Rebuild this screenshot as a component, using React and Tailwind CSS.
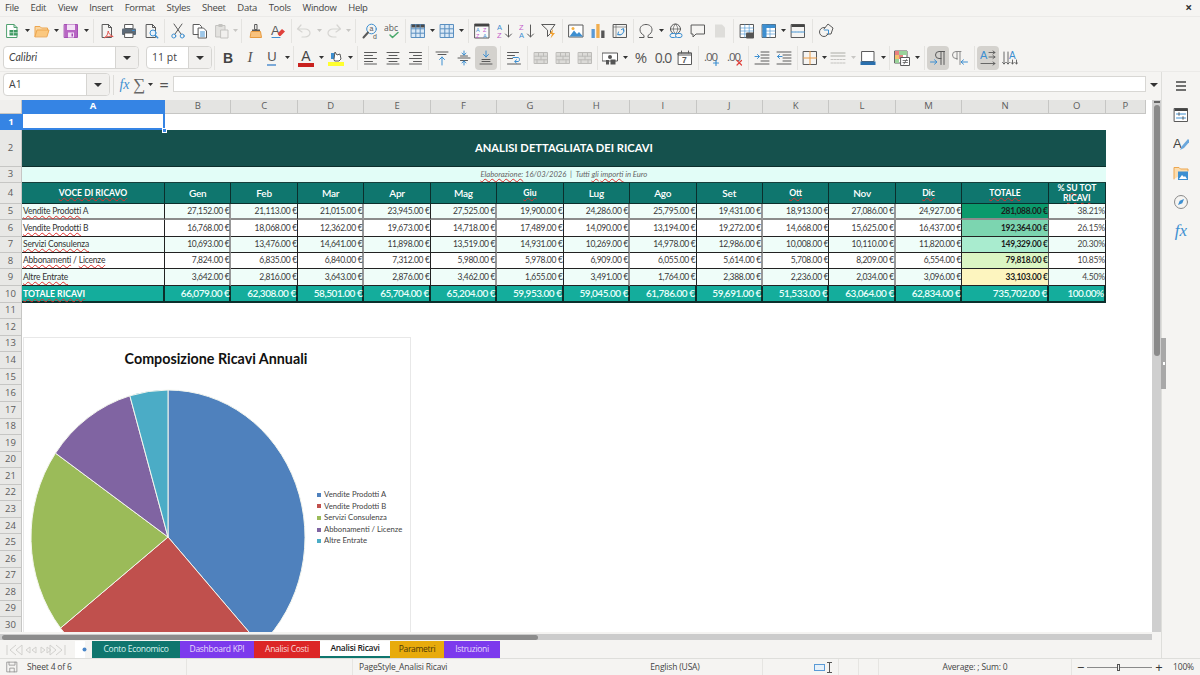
import React from "react";

const S = ({ children, w = 16, h = 16, vb = "0 0 16 16" }) => (
  <svg width={w} height={h} viewBox={vb} fill="none" strokeLinecap="round" strokeLinejoin="round">{children}</svg>
);
const G = "#5a5a5a", B = "#3d8fd1", L = "#c4c3c0";
const Doc = ({ c = G }) => <path d="M3.5 1.5h6l3 3v10h-9z M9.5 1.5v3h3" stroke={c} />;
const Lines = ({ d, c = G }) => <path d={d} stroke={c} />;
const Brick = () => (
  <S><rect x="1.5" y="2.5" width="13" height="11" fill="#dcdbd8" stroke="#bcbbb8" /><path d="M1.5 6.2h13M1.5 9.8h13M5.5 2.5v3.7M10.5 2.5v3.7M8 6.2v3.6M4 9.8v3.7M11 9.8v3.7" stroke="#bcbbb8" /></S>
);
const TableI = ({ head }) => (
  <S><rect x="1.5" y="1.5" width="13" height="13" fill="#dbe9f6" stroke="#5a8fc0" />{head && <rect x="1.5" y="1.5" width="13" height="3" fill="#4a4a4a" />}<path d="M1.5 5.8h13M1.5 10.2h13M5.8 1.5v13M10.2 1.5v13" stroke="#5a8fc0" /></S>
);

const Icons = {
  nw: <S><path d="M3 1.5h7l3 3v10H3z" fill="#fff" stroke="#4fa06f" /><path d="M10 1.5v3h3" stroke="#4fa06f" /><rect x="5.5" y="7" width="8" height="5.5" fill="#3f9a63" /><path d="M5.5 9.7h8M9.5 7v5.5" stroke="#cfead9" strokeWidth=".7" /></S>,
  open: <S><path d="M1 13.5V3.5h5l1.5 1.5h6v2" fill="#f9d6a2" stroke="#eda64f" /><path d="M1 13.5l2-6.5h12l-2 6.5z" fill="#fbc87f" stroke="#eda64f" /></S>,
  save: <S><path d="M1.5 1.5h13v13h-13z" fill="#b866c4" stroke="#a44fb3" /><rect x="4" y="1.5" width="8" height="5.5" fill="#f3e2f6" /><rect x="5" y="9.5" width="6" height="5" fill="#f3e2f6" /><rect x="8.5" y="10.5" width="1.5" height="3" fill="#a44fb3" /></S>,
  pdf: <S><Doc /><path d="M6 14.5c2-1 3-4 3.2-6.5.5 2.5 2 4.5 5 5.5-3-.5-6 0-8.500 1z" stroke="#e0544e" /></S>,
  print: <S><rect x="4" y="1.500" width="8" height="4" fill="#fff" stroke={G} /><rect x="1" y="5.500" width="14" height="6.500" rx="1" fill="#5d6b78" /><rect x="4" y="10" width="8" height="4.500" fill="#fff" stroke={G} /><path d="M11.500 7.500h2" stroke={B} /></S>,
  prev: <S><Doc /><circle cx="10" cy="10" r="3" fill="#eaf3fb" stroke={B} /><path d="M12.200 12.200l2.500 2.500" stroke={B} strokeWidth="1.500" /></S>,
  cut: <S><path d="M4 1l7 10M12 1L5 11" stroke={G} /><circle cx="3.800" cy="13" r="2" stroke={B} /><circle cx="12.200" cy="13" r="2" stroke={B} /></S>,
  copy: <S><path d="M1.500 1.500h6l2 2v8h-8z" fill="#fff" stroke={G} /><path d="M6.500 5h5l3 3v7h-8z" fill="#fff" stroke={G} /><path d="M8.500 9h4M8.500 11h4M8.500 13h4" stroke={B} /></S>,
  paste: <S><rect x="2" y="2.500" width="9" height="11.500" fill="#e3e2df" stroke={L} /><rect x="4.500" y="1" width="4" height="3" fill={L} /><rect x="7" y="7" width="7" height="8" fill="#f1f0ee" stroke={L} /></S>,
  clone: <S><path d="M7 1.500h2v5H7z" stroke={G} /><path d="M4 6.500h8v2H4z" fill="#5a5a5a" /><path d="M3.500 8.500h9l1 6h-11z" fill="#f9c27d" stroke="#e79a3f" /></S>,
  clear: <S><text x="1" y="11.500" fontSize="13" fontFamily="Liberation Sans" fill={G}>A</text><path d="M8 10l4-4 3 2.500-4.500 4.500H9z" fill="#e0413c" /><path d="M2 14.500h8" stroke={B} /></S>,
  undo: <S><path d="M5 2L1.500 6 6 9M2 6h7c3 0 5 2 5 4s-2 4-5 4H6" stroke="#d6d5d2" strokeWidth="1.200" /></S>,
  redo: <S><path d="M11 2l3.500 4L10 9M14 6H7c-3 0-5 2-5 4s2 4 5 4h3" stroke="#d6d5d2" strokeWidth="1.200" /></S>,
  find: <S><circle cx="9.500" cy="6" r="4.800" stroke={B} /><path d="M6 9.500L1.500 14.500" stroke={G} strokeWidth="2" /><text x="7.500" y="8" fontSize="7" fill={G} fontFamily="Liberation Sans">a</text><text x="11" y="15.500" fontSize="7" fill={G} fontFamily="Liberation Sans">d</text></S>,
  spell: <S><text x="0" y="8" fontSize="8.500" fontFamily="Open Sans" fill={G}>abc</text><path d="M6 12l2.500 2.500L14 9.500" stroke="#4aa96c" strokeWidth="1.500" /></S>,
  tbl: <TableI head />,
  tbl2: <TableI />,
  az: <S><rect x="1" y="1" width="14" height="14" fill="#fafafa" stroke={G} /><rect x="1" y="1" width="14" height="2.500" fill="#444" /><text x="2" y="9" fontSize="5.500" fill={B} fontFamily="Liberation Sans">A</text><text x="9" y="9" fontSize="5.500" fill="#c35bc9" fontFamily="Liberation Sans">Z</text><text x="2" y="14.500" fontSize="5.500" fill="#c35bc9" fontFamily="Liberation Sans">Z</text><text x="9" y="14.500" fontSize="5.500" fill={B} fontFamily="Liberation Sans">A</text></S>,
  asc: <S><text x="0" y="7" fontSize="7.500" fill={B} fontFamily="Liberation Sans">A</text><text x="0" y="15" fontSize="7.500" fill="#c35bc9" fontFamily="Liberation Sans">Z</text><path d="M11.500 2v12M8.500 11l3 3 3-3" stroke={G} /></S>,
  desc: <S><text x="0" y="7" fontSize="7.500" fill="#c35bc9" fontFamily="Liberation Sans">Z</text><text x="0" y="15" fontSize="7.500" fill={B} fontFamily="Liberation Sans">A</text><path d="M11.500 2v12M8.500 11l3 3 3-3" stroke={G} /></S>,
  filter: <S><path d="M1 1.500h13l-4.500 6v3l-3 3v-6z" stroke={G} /><path d="M12 6l-3.500 5H11l-1.500 4.500L14 10h-2.500z" fill="#f0a030" /></S>,
  img: <S><rect x="1" y="2" width="14" height="12" fill="#fff" stroke={G} /><path d="M1.500 13.500l4.500-6 3 3.500 2-2 4 4.500z" fill={B} /><circle cx="5" cy="5.500" r="1.500" fill="#f5b041" /></S>,
  chart: <S><rect x="1.500" y="6" width="3.300" height="9" fill="#5a9ad6" /><rect x="6.300" y="1" width="3.300" height="14" fill="#f0ad4e" /><rect x="11.200" y="7.500" width="3.300" height="7.500" fill="#555" /></S>,
  pivot: <S><rect x="1.500" y="1.500" width="13" height="13" fill="#f3f3f1" stroke={G} /><path d="M4 1.500v13M1.500 4h13" stroke={G} strokeWidth=".6" /><path d="M6 11.500a4 4 0 0 0 5.500-5M9.500 6.500l2-1 .5 2.500M6.500 9l-.8 2.800 2.500-.2" stroke={B} /></S>,
  omega: <S vb="0 0 16 16"><path d="M1.500 14.500H6v-2C3.500 11 2 9 2 6.800 2 3.500 4.500 1.500 8 1.500s6 2 6 5.300c0 2.200-1.500 4.200-4 5.700v2h4.500" stroke={G} /></S>,
  link: <S><circle cx="7.500" cy="6" r="5" stroke={G} /><path d="M2.500 6h10M7.500 1c-3 3-3 7 0 10M7.500 1c3 3 3 7 0 10" stroke={G} strokeWidth=".7" /><rect x="2" y="10.500" width="6.500" height="4" rx="2" fill="#f5f4f2" stroke={B} /><rect x="7.500" y="10.500" width="6.500" height="4" rx="2" fill="#f5f4f2" stroke={B} /></S>,
  comment: <S><path d="M1.500 2h13v9H6l-3 3v-3H1.500z" stroke={G} /></S>,
  note: <S><path d="M3 1.500h7l3 3v10H3z" fill="#dedddA" /></S>,
  hdr: <S><rect x="1.500" y="1.500" width="13" height="13" fill="#fff" stroke={G} /><path d="M1.500 5h13M1.500 8h13M1.500 11h13M5.800 1.500v13M10.200 1.500v13" stroke={B} strokeWidth=".6" /><rect x="7" y="9.500" width="8" height="6" rx="1" fill="#555" /></S>,
  frz: <S><rect x="1.500" y="1.500" width="13" height="13" fill="#fff" stroke={G} /><rect x="1.500" y="1.500" width="13" height="3.500" fill="#3d8fd1" /><rect x="1.500" y="1.500" width="4" height="13" fill="#3d8fd1" /><path d="M1.500 8h13M1.500 11h13M9 1.500v13" stroke={B} strokeWidth=".6" /></S>,
  win: <S><rect x="1.500" y="1.500" width="13" height="13" stroke={G} /><rect x="1.500" y="1.500" width="13" height="2.500" fill="#444" /><path d="M1.500 9h13" stroke={B} strokeDasharray="2 1" /></S>,
  shp: <S><circle cx="6" cy="9" r="4.500" stroke={G} /><path d="M6 6l4-5 5 4-2 6H9" fill="#f5f4f2" stroke={G} /><path d="M6.500 7h4v4" stroke={B} /></S>,
  bold: <span className="[font-family:'Liberation_Sans',sans-serif] font-bold text-[14px] text-[#444] leading-none">B</span>,
  ital: <span className="[font-family:'Liberation_Serif',serif] italic text-[15px] text-[#555] leading-none">I</span>,
  und: <span className="flex flex-col items-center leading-none"><span className="[font-family:'Liberation_Sans',sans-serif] text-[13px] text-[#555] leading-none">U</span><span className="w-[9px] h-[2px] bg-[#7ba9d8] mt-[1px]" /></span>,
  colA: <span className="flex flex-col items-center leading-none"><span className="[font-family:'Liberation_Sans',sans-serif] text-[14px] text-[#444] leading-none">A</span><span className="w-[16px] h-[4px] bg-[#c9211e] mt-[0px]" /></span>,
  hi: <S><path d="M3 3h4v6H3z" fill={B} /><path d="M6 9l1-7 2 3 3-1 1 5-2 2H7z" fill="#fff" stroke={G} /><rect x="0" y="12" width="16" height="4" fill="#ffff2e" /></S>,
  al: <S><Lines d="M1.500 2.500h12M1.500 5.500h8M1.500 8.500h12M1.500 11.500h8M1.500 14h12" /></S>,
  ac: <S><Lines d="M2 2.500h12M4 5.500h8M2 8.500h12M4 11.500h8M2 14h12" /></S>,
  ar: <S><Lines d="M2.500 2.500h12M6.500 5.500h8M2.500 8.500h12M6.500 11.500h8M2.500 14h12" /></S>,
  vt: <S><Lines d="M2 2h12M4 4.500h8" /><Lines d="M8 15V7M5.500 9.500L8 7l2.500 2.500" c={B} /></S>,
  vm: <S><Lines d="M2 8h12M4.500 6h7M4.500 10.500h7" /><Lines d="M8 1v4M6 3.200L8 5l2-1.800M8 15v-4M6 12.800L8 11l2 1.800" c={B} /></S>,
  vb: <S><Lines d="M4 11.500h8M2 14h12M4 9.500h8" /><Lines d="M8 1v6M5.500 4.500L8 7l2.500-2.500" c={B} /></S>,
  wrap: <S><Lines d="M1.500 2.500h11M1.500 5.500h7M1.500 8.500h5M1.500 14h13" /><Lines d="M7 7.500h5c2 0 2 4 0 4H9M10.500 9.800L8.700 11.500l1.800 1.700" c={B} /></S>,
  merge: <Brick />,
  cur: <S vb="0 0 16 16"><rect x="0.500" y="3" width="15" height="8" fill="#fff" stroke={G} /><circle cx="8" cy="7" r="2" fill="#555" /><rect x="4" y="10" width="3" height="4.500" fill="#555" /><rect x="8.500" y="9.500" width="5" height="5" fill="#555" /></S>,
  pct: <span className="[font-family:'Open_Sans',sans-serif] text-[15px] text-[#555] leading-none">%</span>,
  zero: <span className="[font-family:'Open_Sans',sans-serif] text-[14px] text-[#555] leading-none tracking-[-1px]">0.0</span>,
  date: <S><rect x="1.500" y="3" width="13" height="11.500" fill="#fff" stroke={G} /><path d="M1.500 3h13v2h-13zM4.500 1v2M11.500 1v2" stroke={G} /><text x="5" y="13" fontSize="8.500" fontWeight="bold" fill="#555" fontFamily="Liberation Sans">7</text></S>,
  addd: <S><text x="0" y="11" fontSize="11.500" fill={G} fontFamily="Open Sans" letterSpacing="-1">.00</text><path d="M12 10.500v5M9.500 13h5" stroke={B} strokeWidth="1.200" /></S>,
  remd: <S><text x="0" y="11" fontSize="11.500" fill={G} fontFamily="Open Sans" letterSpacing="-1">.00</text><path d="M10 10.500l4.500 4.500M14.500 10.500L10 15" stroke="#e0413c" strokeWidth="1.200" /></S>,
  ind: <S><Lines d="M7 2h8M7 5h8M7 8h8M7 11h8M1 14h14" /><Lines d="M1 6.500h4M3.500 4.500l2 2-2 2" c={B} /></S>,
  out: <S><Lines d="M1 2h14M7 5h8M7 8h8M7 11h8M1 14h14" /><Lines d="M6 6.500H1.500M3.500 4.500l-2 2 2 2" c={B} /></S>,
  brd: <S><rect x="1.500" y="1.500" width="13" height="13" stroke={G} /><path d="M8 1.500v13M1.500 8h13" stroke="#e89a45" /></S>,
  bst: <S><path d="M1 3h14M1 6h14" stroke={L} strokeWidth="1.300" /><path d="M1 9.500h14M1 13h14" stroke={L} strokeDasharray="2 1" /></S>,
  bcl: <S><rect x="2" y="1.500" width="12" height="10" fill="#fff" stroke={G} /><rect x="0.500" y="11.500" width="15" height="3.500" fill="#2a6fad" /></S>,
  cond: <S><rect x="1" y="1" width="12" height="12" fill="#fff" stroke={G} /><rect x="1" y="1" width="4" height="4" fill="#e98080" /><rect x="5" y="1" width="8" height="4" fill="#9ad29a" /><rect x="1" y="5" width="4" height="4" fill="#f3c26c" /><rect x="5" y="5" width="4" height="4" fill="#e98080" /><rect x="1" y="9" width="4" height="4" fill="#9ad29a" /><rect x="7" y="7.500" width="8.500" height="8" fill="#fff" stroke={G} /><path d="M9 10.500h4.500M9 12.500h4.500M12.500 9.500l-2.500 4.500" stroke={G} strokeWidth=".8" /></S>,
  ltr: <S><path d="M11 1.500v13M14 1.500v13M14.500 1.500H9a3.500 3.500 0 0 0 0 7h2" stroke={G} /><path d="M0.500 12h6M4.500 9.800L7 12l-2.500 2.200" stroke={B} /></S>,
  rtl: <S><path d="M5 1.500v8M8 1.500v13M9 1.500H4a3.500 3.500 0 0 0 0 7h1" stroke="#8a8a8a" /><path d="M15.500 12h-6M11.500 9.800L9 12l2.500 2.200" stroke={B} /></S>,
  thz: <S><text x="0" y="9" fontSize="11" fill={B} fontFamily="Liberation Sans">A</text><path d="M9 2.500h6M13 1l2 1.500L13 4M9 7h6M13 5.500L15 7l-2 1.500M1 13.500h14M13 12l2 1.500-2 1.500" stroke={G} strokeWidth=".9" /></S>,
  tvt: <S><text x="7" y="9" fontSize="10" fill={B} fontFamily="Liberation Sans">A</text><path d="M2 2v12M.500 12.500L2 14l1.500-1.500M6 2v12M4.500 12.500L6 14l1.500-1.500M10.500 10v4M9 12.500l1.500 1.500 1.500-1.500M14.500 10v4M13 12.500l1.500 1.500 1.500-1.500" stroke={G} strokeWidth=".9" /></S>,
};

const Btn = ({ k, active }) => (
  <div className={`w-[22px] h-[24px] shrink-0 flex items-center justify-center rounded-[4px] ${active ? "bg-[#d4d2ce]" : ""}`}>{Icons[k]}</div>
);
const Caret = ({ cls, off }) => (
  <div className={`${cls} h-[22px] shrink-0 flex items-center justify-center`}>
    <svg width="5" height="3" viewBox="0 0 5 3"><path d="M0 0h5L2.500 3z" fill={off ? "#c8c7c4" : "#333"} /></svg>
  </div>
);
const Sep = ({ cls }) => (
  <div className={`${cls} h-[24px] shrink-0 flex items-center justify-center`}><div className="w-px h-[24px] bg-[#e4e3e0]" /></div>
);
const Combo = ({ w, text, italic }) => (
  <div className={`${w} h-[23px] shrink-0 flex bg-white border border-[#d6d5d2] rounded-[4px] overflow-hidden`}>
    <div className={`flex-1 flex items-center pl-[5px] text-[10.5px] text-[#444] ${italic ? "italic [font-family:Lato,sans-serif]" : ""}`}>{text}</div>
    <div className="w-[23px] bg-[#f1f0ee] border-l border-[#d6d5d2] flex items-center justify-center">
      <svg width="8" height="4" viewBox="0 0 8 4"><path d="M0 0h8L4 4z" fill="#333" /></svg>
    </div>
  </div>
);

const menus = ["File", "Edit", "View", "Insert", "Format", "Styles", "Sheet", "Data", "Tools", "Window", "Help"];

const Sq = ({ children }) => (
  <span className="underline decoration-wavy decoration-[#e0302c] decoration-1 underline-offset-[1px] [text-decoration-skip-ink:none]">{children}</span>
);

const cols = ["A", "B", "C", "D", "E", "F", "G", "H", "I", "J", "K", "L", "M", "N", "O", "P"];
const hdrs = [["Gen"], ["Feb"], ["Mar"], ["Apr"], ["Mag"], ["Giu", 1], ["Lug"], ["Ago"], ["Set"], ["Ott", 1], ["Nov"], ["Dic", 1]];
const rows = [
  { label: <><Sq>Vendite Prodotti</Sq> A</>, v: [27152, 21113, 21015, 23945, 27525, 19900, 24286, 25795, 19431, 18913, 27086, 24927], t: "281,088.00 €", p: "38.21%", bg: "bg-[#effdf9]", nbg: "bg-[#0b9a6c]", line: "border-b-2 border-b-[#8c8c8c]" },
  { label: <><Sq>Vendite Prodotti</Sq> B</>, v: [16768, 18068, 12362, 19673, 14718, 17489, 14090, 13194, 19272, 14668, 15625, 16437], t: "192,364.00 €", p: "26.15%", bg: "bg-white", nbg: "bg-[#7cd5b0]", line: "border-b border-b-[#222]" },
  { label: <><Sq>Servizi Consulenza</Sq></>, v: [10693, 13476, 14641, 11898, 13519, 14931, 10269, 14978, 12986, 10008, 10110, 11820], t: "149,329.00 €", p: "20.30%", bg: "bg-[#effdf9]", nbg: "bg-[#a9eccf]", line: "border-b border-b-[#222]" },
  { label: <><Sq>Abbonamenti</Sq> / <Sq>Licenze</Sq></>, v: [7824, 6835, 6840, 7312, 5980, 5978, 6909, 6055, 5614, 5708, 8209, 6554], t: "79,818.00 €", p: "10.85%", bg: "bg-white", nbg: "bg-[#dbf5c3]", line: "border-b border-b-[#222]" },
  { label: <><Sq>Altre Entrate</Sq></>, v: [3642, 2816, 3643, 2876, 3462, 1655, 3491, 1764, 2388, 2236, 2034, 3096], t: "33,103.00 €", p: "4.50%", bg: "bg-[#effdf9]", nbg: "bg-[#fdf5bf]", line: "border-b border-b-[#222]" },
];
const totals = [66079, 62308, 58501, 65704, 65204, 59953, 59045, 61786, 59691, 51533, 63064, 62834];
const fmt = (n) => n.toLocaleString("en-US", { minimumFractionDigits: 2 }) + " €";

const RH = ({ n }) => (
  <div className="flex items-center justify-center text-[9.5px] border-r border-b bg-[#e8e8e6] text-[#5c5c5c] border-[#c6c6c4] [font-family:'Open_Sans',sans-serif]">{n}</div>
);

const slices = [
  [38.21, "#4f81bd"], [26.15, "#c0504d"], [20.3, "#9bbb59"], [10.85, "#8064a2"], [4.49, "#4bacc6"],
];
const Pie = () => {
  let acc = 0;
  const cx = 146, cy = 148, rx = 137, ry = 147;
  const pt = (f) => [cx + rx * Math.sin(2 * Math.PI * f), cy - ry * Math.cos(2 * Math.PI * f)];
  return (
    <svg width="292" height="296" viewBox="0 0 292 296">
      {slices.map(([p, c]) => {
        const a = pt(acc / 100);
        acc += p;
        const b = pt(acc / 100);
        return <path key={c} d={`M${cx} ${cy}L${a[0]} ${a[1]}A${rx} ${ry} 0 ${p > 50 ? 1 : 0} 1 ${b[0]} ${b[1]}Z`} fill={c} stroke="#f4f6ee" strokeWidth="1" />;
      })}
    </svg>
  );
};
const legend = [["Vendite Prodotti A", "bg-[#4f81bd]"], ["Vendite Prodotti B", "bg-[#c0504d]"], ["Servizi Consulenza", "bg-[#9bbb59]"], ["Abbonamenti / Licenze", "bg-[#8064a2]"], ["Altre Entrate", "bg-[#4bacc6]"]];

const tabs = [
  ["Conto Economico", "w-[88px] bg-[#0f766e] text-[#d9f3ef]"],
  ["Dashboard KPI", "w-[74px] bg-[#7c3aed] text-[#e6dafc]"],
  ["Analisi Costi", "w-[66px] bg-[#dc2626] text-[#fbdcdc]"],
  ["Analisi Ricavi", "w-[70px] bg-white text-[#222] font-semibold border-b-2 border-[#0f766e]"],
  ["Parametri", "w-[54px] bg-[#e8ab0c] text-[#4a3808]"],
  ["Istruzioni", "w-[56px] bg-[#7c3aed] text-[#e6dafc]"],
];

export default function App() {
  return (
    <div className="w-[1200px] h-[675px] overflow-hidden flex flex-col bg-[#f5f4f2] text-[#3d3d3d] [font-family:'Open_Sans',sans-serif]">
      {/* menu */}
      <div className="h-[17px] shrink-0 flex items-center justify-between pl-[5px] pr-[8px] border-b border-[#ebeae8]">
        <div className="flex gap-[11.7px] text-[9.5px] tracking-[-0.3px] text-[#444]">
          {menus.map((m) => <span key={m}>{m}</span>)}
        </div>
        <span className="text-[12px] font-bold leading-none text-[#333]">×</span>
      </div>
      {/* toolbar 1 */}
      <div className="h-[27px] shrink-0 flex items-center pl-[1px]">
        <Btn k="nw" /><Caret cls="w-[8px]" /><Btn k="open" /><Caret cls="w-[7px]" /><Btn k="save" /><Caret cls="w-[8px]" /><Sep cls="w-[6px]" />
        <Btn k="pdf" /><Btn k="print" /><Btn k="prev" /><Sep cls="w-[5px]" />
        <Btn k="cut" /><Btn k="copy" /><Btn k="paste" /><Caret cls="w-[5px]" off /><Sep cls="w-[7px]" />
        <Btn k="clone" /><Btn k="clear" /><Sep cls="w-[4px]" />
        <Btn k="undo" /><Caret cls="w-[8px]" off /><Btn k="redo" /><Caret cls="w-[6px]" off /><Sep cls="w-[8px]" />
        <Btn k="find" /><Btn k="spell" /><Sep cls="w-[4px]" />
        <Btn k="tbl" /><Caret cls="w-[7px]" /><Btn k="tbl2" /><Caret cls="w-[7px]" /><Sep cls="w-[6px]" />
        <Btn k="az" /><div className="w-px" /><Btn k="asc" /><Btn k="desc" /><Btn k="filter" /><Sep cls="w-[5px]" />
        <Btn k="img" /><Btn k="chart" /><Btn k="pivot" /><Sep cls="w-[4px]" />
        <Btn k="omega" /><Caret cls="w-[8px]" /><Btn k="link" /><Btn k="comment" /><Btn k="note" /><Sep cls="w-[5px]" />
        <Btn k="hdr" /><Btn k="frz" /><Caret cls="w-[7px]" /><Btn k="win" /><Sep cls="w-[6px]" /><Btn k="shp" />
      </div>
      {/* toolbar 2 */}
      <div className="h-[28px] shrink-0 flex items-center pl-[3px] border-b border-[#ebeae8]">
        <Combo w="w-[136px]" text="Calibri" italic /><div className="w-[7px]" /><Combo w="w-[66px]" text="11 pt" /><Sep cls="w-[5px]" />
        <Btn k="bold" /><Btn k="ital" /><Btn k="und" /><Caret cls="w-[8px]" /><Sep cls="w-[4px]" />
        <Btn k="colA" /><Caret cls="w-[8px]" /><Btn k="hi" /><Caret cls="w-[7px]" /><Sep cls="w-[6px]" />
        <Btn k="al" /><Btn k="ac" /><Btn k="ar" /><Sep cls="w-[5px]" />
        <Btn k="vt" /><Btn k="vm" /><Btn k="vb" active /><Sep cls="w-[6px]" /><Btn k="wrap" /><Sep cls="w-[5px]" />
        <Btn k="merge" /><Btn k="merge" /><Btn k="merge" /><Sep cls="w-[3px]" />
        <Btn k="cur" /><Caret cls="w-[9px]" /><Btn k="pct" /><Btn k="zero" /><Btn k="date" /><Sep cls="w-[5px]" />
        <Btn k="addd" /><div className="w-px" /><Btn k="remd" /><Sep cls="w-[5px]" />
        <Btn k="ind" /><Btn k="out" /><Sep cls="w-[4px]" />
        <Btn k="brd" /><Caret cls="w-[6px]" /><Btn k="bst" /><Caret cls="w-[8px]" off /><Btn k="bcl" /><Caret cls="w-[8px]" /><Sep cls="w-[4px]" />
        <Btn k="cond" /><Caret cls="w-[9px]" /><Sep cls="w-[5px]" />
        <Btn k="ltr" active /><Btn k="rtl" /><Sep cls="w-[6px]" /><Btn k="thz" active /><Btn k="tvt" />
      </div>

      <div className="flex-1 min-h-0 flex">
        <div className="w-[1161px] shrink-0 flex flex-col">
          {/* formula bar */}
          <div className="h-[28px] shrink-0 flex items-start pt-[1px] pl-[3px]">
            <Combo w="w-[107px]" text="A1" />
            <div className="w-[7px] h-[23px] flex items-center justify-center"><div className="w-px h-[20px] bg-[#dddcd9]" /></div>
            <div className="w-[15px] h-[23px] flex items-center justify-center [font-family:'Liberation_Serif',serif] italic text-[14px] text-[#3d8fd1] leading-none">fx</div>
            <div className="w-[14px] h-[23px] flex items-center justify-center [font-family:'Liberation_Serif',serif] text-[17px] text-[#666] leading-none">∑</div>
            <Caret cls="w-[9px]" />
            <div className="w-[18px] h-[23px] flex items-center justify-center text-[16px] font-semibold text-[#555] leading-none">=</div>
            <div className="w-[973px] h-[16px] mt-[3px] bg-white border border-[#d8d7d4]" />
            <div className="flex-1 h-[23px] flex items-center justify-center"><svg width="8" height="4" viewBox="0 0 8 4"><path d="M0 0h8L4 4z" fill="#333" /></svg></div>
          </div>
          {/* sheet */}
          <div className="h-[532px] shrink-0 flex">
            <div className="w-[1152px] shrink-0 relative overflow-hidden bg-white">
              <div className="grid grid-cols-[22px_143px_repeat(12,66.44px)_86.5px_57px_40px] grid-rows-[14px_16px_36.8px_16.5px_20.5px_repeat(5,16.4px)_17px_repeat(20,16.55px)] [font-family:Lato,sans-serif]">
                <div className="bg-[#f0efed] border-r border-b border-[#c6c6c4]" />
                {cols.map((c, i) => (
                  <div key={c} className={`flex items-center justify-center text-[9.5px] border-r border-b [font-family:'Open_Sans',sans-serif] ${i === 0 ? "bg-[#3584e4] text-white font-bold border-[#3584e4]" : "bg-[#e4e4e2] text-[#5c5c5c] border-[#c6c6c4]"}`}>{c}</div>
                ))}
                <div className="bg-[#3584e4] text-white font-bold flex items-center justify-center text-[9.5px] [font-family:'Open_Sans',sans-serif]">1</div>
                <div className="bg-white border-2 border-[#3584e4] border-t-0 border-l-[1px]" />
                <div className="col-span-15" />

                <RH n="2" />
                <div className="col-span-15 bg-[#15514d] border-b border-[#0c2f2c] flex items-center justify-center text-white font-bold text-[11.2px]">ANALISI DETTAGLIATA DEI RICAVI</div>
                <div />

                <RH n="3" />
                <div className="col-span-15 bg-[#e2fdf7] border-b border-[#173f3b] flex items-center justify-center italic text-[7.7px] text-[#666]"><span className="whitespace-pre"><Sq>Elaborazione:</Sq> 16/03/2026  |  Tutti <Sq>gli</Sq> <Sq>importi</Sq> in Euro</span></div>
                <div />

                <RH n="4" />
                <div className="bg-[#0f766e] border-r border-b border-[#0b2f2c] flex items-center justify-center text-white font-bold text-[8.6px]"><Sq>VOCE DI RICAVO</Sq></div>
                {hdrs.map(([h, sm]) => (
                  <div key={h} className={`bg-[#0f766e] border-r border-b border-[#0b2f2c] flex items-center justify-center text-white ${sm ? "font-bold text-[8.6px]" : "font-semibold text-[10px] tracking-[-0.2px]"}`}>{sm ? <Sq>{h}</Sq> : h}</div>
                ))}
                <div className="bg-[#0f766e] border-r border-b border-[#0b2f2c] flex items-center justify-center text-white font-bold text-[8.6px]"><Sq>TOTALE</Sq></div>
                <div className="bg-[#0f766e] border-r border-b border-[#0b2f2c] flex items-center justify-center text-center text-white font-bold text-[8.6px] leading-[10px]"><span>% <Sq>SU</Sq> TOT <Sq>RICAVI</Sq></span></div>
                <div />

                {rows.map((r, ri) => (
                  <React.Fragment key={ri}>
                    <RH n={ri + 5} />
                    <div className={`${r.bg} ${r.line} border-r border-r-[#222] flex items-center text-[8.5px] tracking-[-0.2px] text-[#333] pl-[1px] whitespace-nowrap`}><span>{r.label}</span></div>
                    {r.v.map((n, i) => (
                      <div key={i} className={`${r.bg} ${r.line} ${i % 2 === 0 ? "border-r-2 border-r-[#999]" : "border-r border-r-[#222]"} flex items-center justify-end text-[8.5px] tracking-[-0.3px] text-[#3a3a3a] whitespace-nowrap`}>{fmt(n)}</div>
                    ))}
                    <div className={`${r.nbg} ${r.line} border-r border-r-[#555] flex items-center justify-end text-[8.5px] tracking-[-0.3px] font-bold text-[#1c1c1c]`}>{r.t}</div>
                    <div className={`${r.bg} ${r.line} border-r border-r-[#222] flex items-center justify-end text-[8.5px] tracking-[-0.2px] text-[#444]`}>{r.p}</div>
                    <div />
                  </React.Fragment>
                ))}

                <RH n="10" />
                <div className="bg-[#14ad9c] border-r-2 border-b-2 border-[#0c2f2c] flex items-center text-white font-bold text-[8.7px] pl-[1px]"><Sq>TOTALE RICAVI</Sq></div>
                {totals.map((n, i) => (
                  <div key={i} className="bg-[#14ad9c] border-r-2 border-b-2 border-[#0c2f2c] flex items-center justify-end text-[#eafffb] font-semibold text-[10px] tracking-[-0.45px] whitespace-nowrap">{fmt(n)}</div>
                ))}
                <div className="bg-[#14ad9c] border-r-2 border-b-2 border-[#0c2f2c] flex items-center justify-end text-[#eafffb] font-semibold text-[10px] tracking-[-0.45px]">735,702.00 €</div>
                <div className="bg-[#14ad9c] border-r-2 border-b-2 border-[#0c2f2c] flex items-center justify-end text-[#eafffb] font-semibold text-[10px] tracking-[-0.45px]">100.00%</div>
                <div />

                {Array.from({ length: 20 }, (_, i) => (
                  <React.Fragment key={i}>
                    <RH n={i + 11} />
                    <div className="col-span-16" />
                  </React.Fragment>
                ))}
              </div>

              {/* fill handle */}
              <div className="absolute left-[162px] top-[28px] w-[5px] h-[5px] bg-[#3584e4] border border-white" />

              {/* chart */}
              <div className="absolute left-[23px] top-[237px] w-[388px] h-[340px] bg-white border border-[#e8e8e8] [font-family:Lato,sans-serif]">
                <div className="pt-[11px] text-center text-[14.3px] font-bold text-[#111] leading-[20px] pr-[2px]">Composizione Ricavi Annuali</div>
                <div className="absolute left-[-2px] top-[51px]"><Pie /></div>
                <div className="absolute left-[293px] top-[151px] flex flex-col text-[7.7px] text-[#444] leading-[11.6px]">
                  {legend.map(([t, c]) => (
                    <div key={t} className="flex items-center gap-[3px] whitespace-nowrap"><span className={`w-[4px] h-[4px] ${c}`} />{t}</div>
                  ))}
                </div>
              </div>
            </div>
            {/* vscroll */}
            <div className="w-[9px] shrink-0 bg-[#cfcfcf] flex flex-col items-center">
              <div className="w-[6px] h-[1.5px] mt-[1px] bg-[#666]" />
              <div className="w-[6px] h-[251px] mt-[2.5px] rounded-[3px] bg-[#8a8a8a]" />
            </div>
          </div>
          {/* hscroll */}
          <div className="h-[9px] shrink-0 pt-[2px]">
            <div className="w-[1152px] h-[6px] bg-[#cccccc] flex items-center pl-[2px]">
              <div className="w-[536px] h-[5px] rounded-[3px] bg-[#8c8c8c]" />
            </div>
          </div>
          {/* tabs */}
          <div className="h-[17px] shrink-0 flex items-stretch text-[8.5px] tracking-[-0.3px]">
            <div className="w-[75px] flex items-center pl-[6px]">
              <svg width="60" height="12" viewBox="0 0 60 12" fill="none" stroke="#d2d1ce"><path d="M1 1v10M10 1L4 6l6 5M16 1l-6 5 6 5zM24 3l-4 3 4 3zM30 3l-4 3 4 3zM35 3l4 3-4 3zM41 3l4 3-4 3zM44 1l6 5-6 5zM50 1l6 5-6 5M59 1v10" /></svg>
            </div>
            <div className="w-[17px] flex items-center">
              <div className="w-[10px] h-full bg-white" />
              <svg width="5" height="5" viewBox="0 0 5 5" className="-ml-[3px]"><circle cx="2.500" cy="2.500" r="2" fill="#4a86c8" /></svg>
            </div>
            {tabs.map(([t, c]) => (
              <div key={t} className={`${c} flex items-center justify-center whitespace-nowrap`}>{t}</div>
            ))}
          </div>
        </div>
        {/* sidebar */}
        <div className="flex-1 border-l border-[#dededb] flex flex-col items-center pt-[4px] relative">
          <div className="absolute left-[-1px] top-[266px] w-[5px] h-[51px] bg-[#a8a8a8] flex items-center justify-center"><div className="w-[2px] h-[3px] bg-white" /></div>
          <div className="h-[19px] flex items-center">
            <svg width="14" height="12" viewBox="0 0 14 12"><path d="M2 2h10M2 6h10M2 10h10" stroke="#444" strokeWidth="1.400" /></svg>
          </div>
          <div className="h-[29px] mt-[5px] flex items-center"><S><rect x="1.500" y="1.500" width="13" height="13" fill="#fff" stroke={G} /><rect x="1.500" y="1.500" width="13" height="2.500" fill="#444" /><path d="M3.500 7h9M3.500 11h9" stroke={B} /><path d="M6 5.700v2.600M10 9.700v2.600" stroke={G} /></S></div>
          <div className="h-[29px] flex items-center"><S><text x="0" y="12" fontSize="13" fill="#444" fontFamily="Liberation Sans">A</text><path d="M15 3l-6 7-2 4 4-2 6-7" fill="#6aa7dc" /></S></div>
          <div className="h-[29px] flex items-center"><S><path d="M1 14V2.500h5L7.500 4H15v2" fill="#fbdcae" stroke="#eda64f" /><rect x="5" y="6.500" width="10" height="8.500" fill="#3d8fd1" /><path d="M6 14l3-4 2 2 1-1 2 3z" fill="#fff" /></S></div>
          <div className="h-[29px] flex items-center"><S><circle cx="8" cy="8" r="6.500" stroke="#8a8a8a" /><path d="M11 5L9.300 9.300 5 11l1.700-4.300z" fill={B} /></S></div>
          <div className="h-[29px] flex items-center [font-family:'Liberation_Serif',serif] italic text-[17px] text-[#3d8fd1] leading-none">fx</div>
        </div>
      </div>

      {/* status bar */}
      <div className="h-[17px] shrink-0 flex items-center border-t border-[#dededb] text-[8.5px] tracking-[-0.17px] text-[#444] whitespace-nowrap">
        <div className="w-[187px] h-full flex items-center border-r border-[#e6e5e2] pl-[6px] gap-[9px]">
          <S w={12} h={12}><path d="M1.500 1.500h13v13h-13z" stroke="#8a8a8a" /><path d="M4 1.500v4h8v-4M5 14.500v-5h6v5" stroke="#8a8a8a" /></S>
          <span>Sheet 4 of 6</span>
        </div>
        <div className="w-[166px] h-full border-r border-[#e6e5e2]" />
        <div className="w-[235px] h-full flex items-center pl-[6px]">PageStyle_Analisi Ricavi</div>
        <div className="w-[175px] h-full flex items-center justify-center border-r border-[#e6e5e2]">English (USA)</div>
        <div className="w-[45px] h-full" />
        <div className="w-[31px] h-full flex items-center justify-center gap-[2px] border-r border-[#e6e5e2]">
          <div className="w-[11px] h-[7px] bg-[#e6f1fa] border border-[#5a9ad6]" />
          <svg width="5" height="11" viewBox="0 0 5 11"><path d="M0 .500h5M2.500 .500v10M0 10.500h5" stroke="#555" /></svg>
        </div>
        <div className="w-[20px] h-full border-r border-[#e6e5e2]" />
        <div className="w-[20px] h-full border-r border-[#e6e5e2]" />
        <div className="w-[193px] h-full flex items-center justify-center border-r border-[#e6e5e2]">Average: ; Sum: 0</div>
        <div className="w-[95px] h-full flex items-center gap-[3px] pl-[5px]">
          <span className="text-[13px] leading-none text-[#333]">−</span>
          <div className="w-[65px] h-px bg-[#8a8a8a] relative"><div className="absolute left-[30px] -top-[3px] w-[3px] h-[7px] bg-[#f5f4f2] border border-[#555]" /></div>
          <span className="text-[13px] leading-none text-[#333]">+</span>
        </div>
        <div className="flex-1 text-center">100%</div>
      </div>
    </div>
  );
}
